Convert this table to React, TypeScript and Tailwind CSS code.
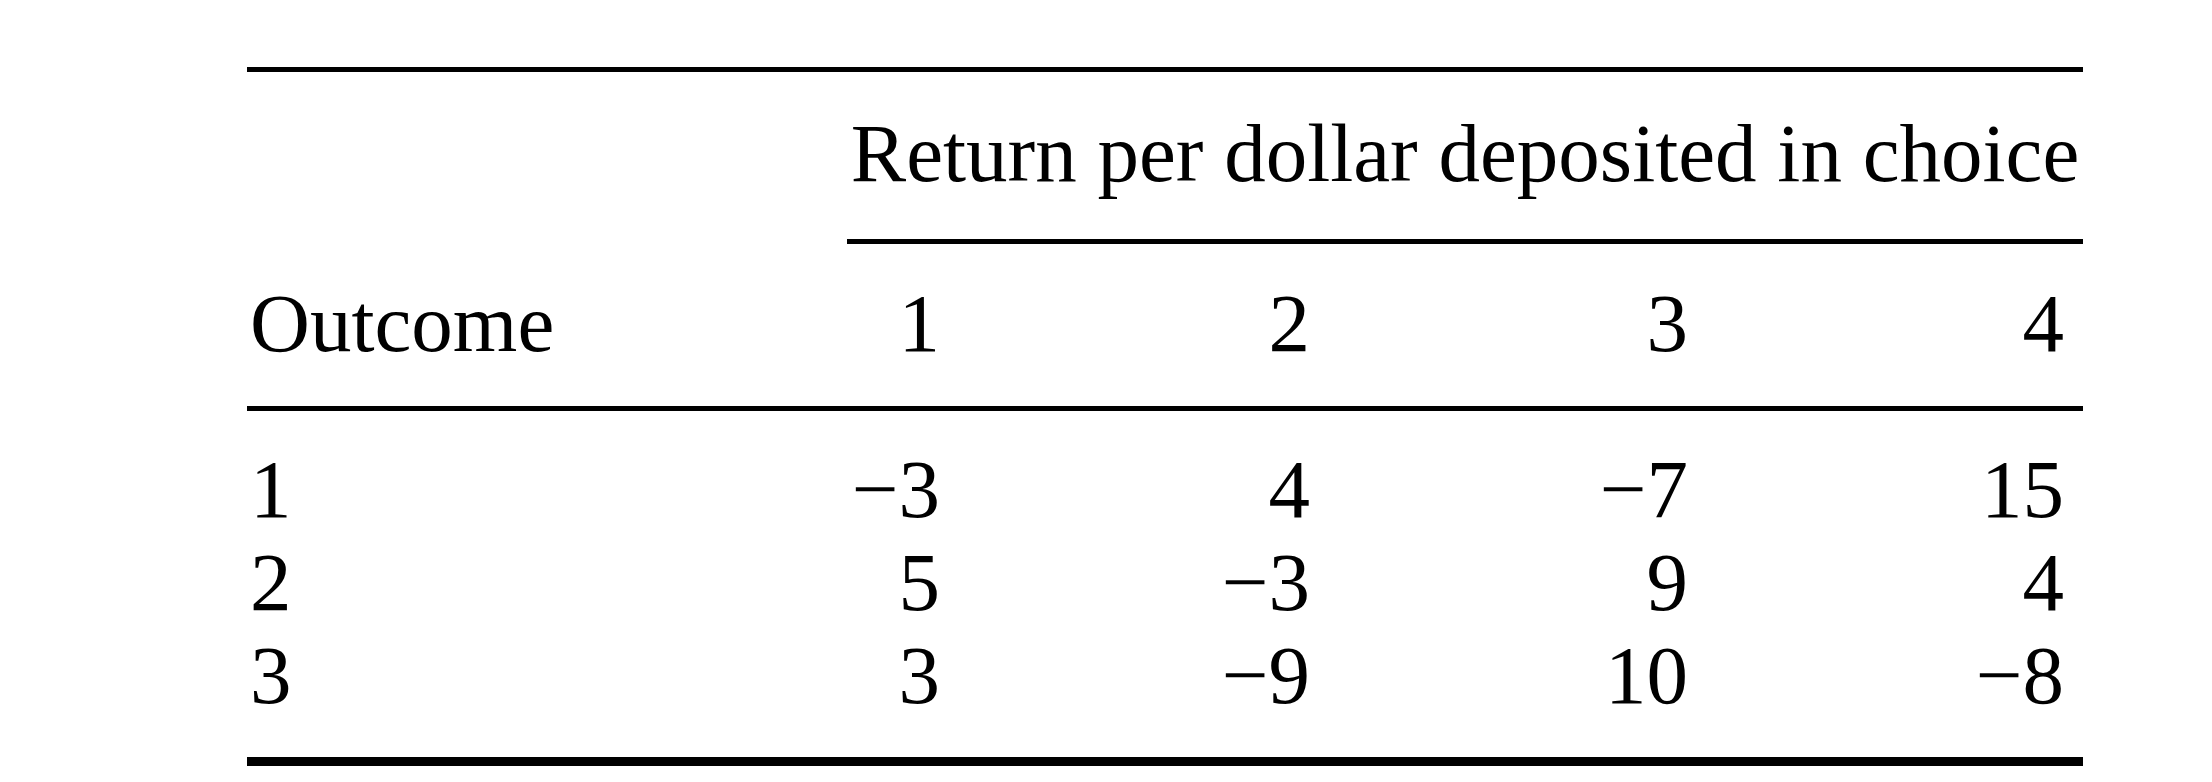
const columns = 'grid grid-cols-[600px_93px_370px_378px_376px_19px]';

const rows = [
  { outcome: '1', values: ['−3', '4', '−7', '15'] },
  { outcome: '2', values: ['5', '−3', '9', '4'] },
  { outcome: '3', values: ['3', '−9', '10', '−8'] },
];

function Rule({ className }: { className: string }) {
  return <div className={`bg-black ${className}`} />;
}

function TableRow({
  label,
  values,
  className,
}: {
  label: string;
  values: string[];
  className: string;
}) {
  return (
    <div className={`${columns} ${className}`}>
      <div className="pl-[3px] text-left">{label}</div>
      {values.map((value, i) => (
        <div key={i} className="whitespace-nowrap text-right">
          {value}
        </div>
      ))}
      <div />
    </div>
  );
}

export default function App() {
  return (
    <div className="min-h-[782px] w-full bg-white pl-[247px] pt-[67px] font-['Liberation_Serif','Times_New_Roman',serif] text-[83px] text-black">
      <div className="w-[1836px]">
        <Rule className="h-[5px]" />

        <div className="ml-[600px] pt-[40px] text-center leading-[83px] whitespace-nowrap">
          Return per dollar deposited in choice
        </div>
        <Rule className="ml-[600px] mt-[44px] h-[5px]" />

        <TableRow
          label="Outcome"
          values={['1', '2', '3', '4']}
          className="pt-[38px] pb-[41px] leading-[83px]"
        />
        <Rule className="h-[5px]" />

        <div className="pt-[32px] pb-[35px] leading-[93px]">
          {rows.map((row) => (
            <TableRow
              key={row.outcome}
              label={row.outcome}
              values={row.values}
              className=""
            />
          ))}
        </div>
        <Rule className="h-[9px]" />
      </div>
    </div>
  );
}
